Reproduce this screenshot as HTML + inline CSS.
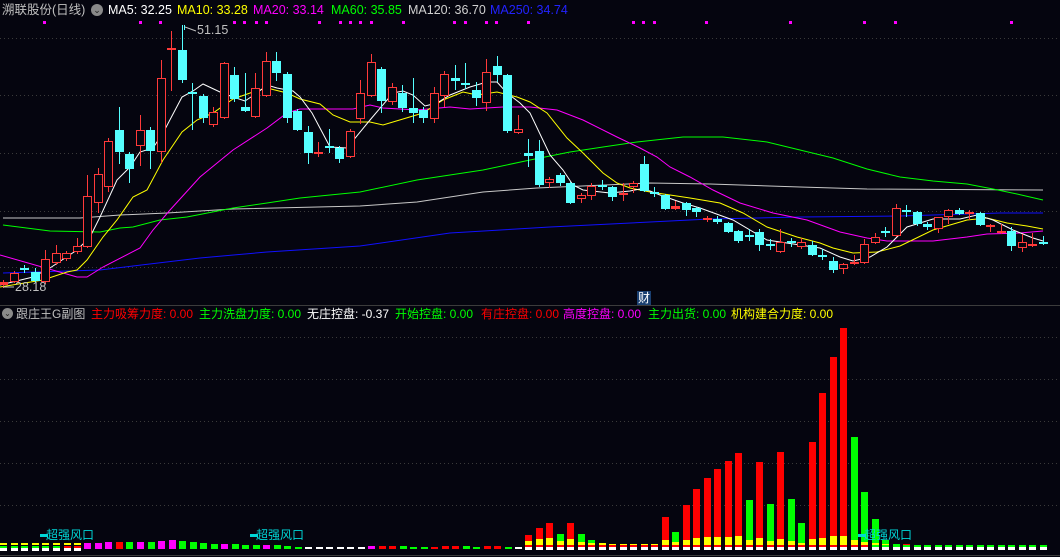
<!DOCTYPE html>
<html><head><meta charset="utf-8">
<style>
html,body{margin:0;padding:0;background:#05050f;width:1060px;height:557px;overflow:hidden;}
body{position:relative;font-family:"Liberation Sans","Noto Sans CJK SC",sans-serif;font-size:12.5px;}
.t{position:absolute;white-space:nowrap;line-height:15px;}
.u{font-size:12px;}
svg{position:absolute;left:0;top:0;}
</style></head><body>
<svg id="s" width="1060" height="557" xmlns="http://www.w3.org/2000/svg"></svg>
<div class="t" style="left:2px;top:3px;color:#c0c0c0">溯联股份(日线)</div>
<div class="t" style="left:91px;top:4px;width:12px;height:12px;border-radius:50%;background:#8a8a8a;color:#222;font-size:9px;text-align:center;line-height:12px">⌄</div>
<div class="t" style="left:108px;top:3px;color:#fff">MA5: 32.25</div>
<div class="t" style="left:177px;top:3px;color:#ffff00">MA10: 33.28</div>
<div class="t" style="left:253px;top:3px;color:#ff00ff">MA20: 33.14</div>
<div class="t" style="left:331px;top:3px;color:#00ff00">MA60: 35.85</div>
<div class="t" style="left:408px;top:3px;color:#d0d0d0">MA120: 36.70</div>
<div class="t" style="left:490px;top:3px;color:#2222ff">MA250: 34.74</div>
<div class="t" style="left:197px;top:23px;color:#c0c0c0">51.15</div>
<div class="t" style="left:15px;top:280px;color:#c0c0c0">28.18</div>
<div class="t" style="left:637px;top:291px;width:14px;height:14px;background:#1a3f70;color:#fff;font-size:12px;line-height:14px;text-align:center">财</div>
<div class="t" style="left:2px;top:308px;width:11px;height:11px;border-radius:50%;background:#8a8a8a;color:#222;font-size:8px;text-align:center;line-height:11px">⌄</div>
<div class="t u" style="left:16px;top:307px;color:#c0c0c0">跟庄王G副图</div>
<div class="t u" style="left:91px;top:307px;color:#ff0000">主力吸筹力度: 0.00</div>
<div class="t u" style="left:199px;top:307px;color:#00ff00">主力洗盘力度: 0.00</div>
<div class="t u" style="left:307px;top:307px;color:#fff">无庄控盘: -0.37</div>
<div class="t u" style="left:395px;top:307px;color:#00ff00">开始控盘: 0.00</div>
<div class="t u" style="left:481px;top:307px;color:#ff0000">有庄控盘: 0.00</div>
<div class="t u" style="left:563px;top:307px;color:#ff00ff">高度控盘: 0.00</div>
<div class="t u" style="left:648px;top:307px;color:#00ff00">主力出货: 0.00</div>
<div class="t u" style="left:731px;top:307px;color:#ffff00">机构建合力度: 0.00</div>
<div class="t u" style="left:46px;top:528px;color:#00d8d8">超强风口</div>
<div class="t u" style="left:256px;top:528px;color:#00d8d8">超强风口</div>
<div class="t u" style="left:864px;top:528px;color:#00d8d8">超强风口</div>
<script>
var s=document.getElementById('s'),h='';
function L(x1,y1,x2,y2,c,d){h+='<line x1="'+x1+'" y1="'+y1+'" x2="'+x2+'" y2="'+y2+'" stroke="'+c+'" stroke-width="1"'+(d?' stroke-dasharray="1,3"':'')+'/>';}
function R(x,y,w,hh,c){h+='<rect x="'+x+'" y="'+y+'" width="'+w+'" height="'+hh+'" fill="'+c+'"/>';}
[38,95,153,211,267,337,379,421,463,505].forEach(function(y){L(0,y+.5,1060,y+.5,'#3a3a3a',1);});
L(0,305.5,1060,305.5,'#3c3c3c');L(0,555.5,1060,555.5,'#3c3c3c');
[44,140,160,234,244,256,266,319,340,350,360,371,403,454,465,486,496,528,633,643,654,706,790,864,895,1011].forEach(function(x){R(x-1,21,3,3,'#ff00ff');});
function P(pts,c){h+='<polyline fill="none" stroke="'+c+'" stroke-width="1" points="'+pts+'"/>';}
P("3,218 80,218 120,215 167,213 233,209 360,206 417,202 483,192 537,188 650,183 710,184 800,187 867,189 1043,190",'#c8c8c8');
P("3,273 100,270 133,266 200,258 267,252 360,246 450,233 550,227 650,222 710,219 800,217 900,216 1000,213 1043,213",'#1010ff');
P("3,225 50,231 100,232 120,228 133,227 160,220 187,217 233,208 267,203 300,198 360,192 417,180 483,170 530,160 570,152 603,147 637,142 683,137 723,137 767,142 800,150 833,158 867,169 900,177 933,181 967,184 993,189 1017,194 1043,200",'#00ff00');
P("0,255 77,277 87,277 103,267 140,248 153,230 170,210 200,177 233,150 267,128 287,113 300,109 353,109 370,105 383,108 417,110 450,107 470,109 503,107 530,107 557,110 583,120 617,137 640,148 657,157 670,167 690,177 713,190 740,203 773,213 807,220 840,232 867,238 887,241 933,241 967,237 987,234 1020,233 1043,231",'#ff00ff');
P("0,287 43,280 67,272 77,270 87,260 103,237 117,220 133,197 147,190 163,160 182,132 197,120 213,113 233,99 253,92 267,88 287,93 300,99 320,104 333,115 350,122 370,122 383,125 403,119 423,113 443,100 463,92 477,95 497,92 517,97 530,102 547,113 567,138 583,153 603,173 617,183 630,188 650,192 670,195 690,198 720,203 743,213 767,227 797,237 820,243 833,248 853,253 877,252 900,246 933,230 967,220 987,218 1007,223 1027,226 1043,229",'#ffff00');
P("0,285 33,277 50,268 77,250 90,237 100,217 117,180 130,167 140,152 153,148 163,133 182,97 193,91 203,84 220,92 233,97 245,101 257,93 267,85 277,88 293,91 300,97 312,113 330,147 347,148 370,120 393,93 403,91 413,95 425,106 437,103 450,95 470,87 487,82 497,82 507,93 520,103 530,113 550,155 563,170 573,185 583,190 610,193 630,191 640,189 650,191 660,195 683,203 700,208 733,220 767,240 800,245 820,248 840,257 853,261 870,257 887,247 907,227 933,219 960,219 977,215 993,220 1013,230 1033,238 1043,241",'#ffffff');
var C=[[282,285,280,288,'r'],[273,282,271,283,'r'],[268,270,265,273,'c'],[272,281,268,283,'c'],[259,282,250,284,'r'],[253,263,245,265,'r'],[253,259,251,261,'r'],[246,252,238,254,'r'],[196,247,175,248,'r'],[174,203,168,213,'r'],[141,187,138,192,'r'],[130,152,107,164,'c'],[154,169,152,183,'c'],[130,146,115,166,'r'],[130,151,127,169,'c'],[78,152,60,163,'r'],[48,50,31,91,'r'],[50,80,25,83,'c'],[92,94,83,130,'c'],[96,118,94,123,'c'],[112,125,107,127,'r'],[63,118,62,119,'r'],[75,99,67,102,'c'],[107,111,73,112,'c'],[88,117,73,118,'r'],[61,96,52,97,'r'],[61,73,52,81,'c'],[74,118,72,123,'c'],[111,130,109,131,'c'],[132,153,126,164,'c'],[152,154,142,157,'r'],[146,148,129,153,'c'],[148,159,146,163,'c'],[131,157,129,158,'r'],[93,119,80,124,'r'],[62,96,54,97,'r'],[69,101,67,113,'c'],[87,102,83,105,'r'],[93,108,85,112,'c'],[108,113,78,123,'c'],[110,118,107,123,'c'],[93,119,87,123,'r'],[74,96,71,107,'r'],[78,81,65,90,'c'],[83,85,63,89,'c'],[90,98,82,106,'c'],[72,103,59,111,'r'],[66,75,56,82,'c'],[75,131,74,133,'c'],[129,133,115,134,'r'],[153,156,139,167,'c'],[151,185,140,187,'c'],[179,183,177,188,'r'],[175,183,173,186,'c'],[183,203,182,204,'c'],[195,199,193,203,'r'],[186,196,183,200,'r'],[185,187,180,190,'c'],[187,197,186,201,'c'],[193,195,183,201,'r'],[183,187,181,193,'r'],[164,191,156,192,'c'],[192,194,187,197,'c'],[195,209,194,210,'c'],[206,209,201,210,'r'],[203,210,202,216,'c'],[208,212,207,217,'c'],[218,220,216,222,'r'],[219,222,216,224,'c'],[223,232,222,233,'c'],[231,241,230,243,'c'],[235,237,229,241,'c'],[232,245,229,251,'c'],[244,246,239,250,'c'],[242,252,229,253,'r'],[241,243,238,247,'c'],[242,247,238,249,'r'],[245,255,241,256,'c'],[255,257,249,260,'c'],[261,270,257,273,'c'],[264,269,263,274,'r'],[262,264,255,265,'r'],[244,263,239,264,'r'],[237,243,233,244,'r'],[231,233,227,237,'c'],[208,236,204,237,'r'],[210,212,205,217,'c'],[212,224,211,226,'c'],[224,227,222,230,'c'],[217,229,217,233,'r'],[210,217,209,224,'r'],[210,214,208,215,'c'],[212,214,210,220,'r'],[213,225,212,226,'c'],[225,227,224,232,'r'],[231,233,224,234,'r'],[231,246,227,251,'c'],[242,248,234,252,'r'],[244,246,233,247,'r'],[242,244,236,245,'c']];
C.forEach(function(d,i){var x=Math.round(3+10.5*i);var col=d[4]=='r'?'#ff3a3a':'#55ffff';
 L(x+.5,d[2],x+.5,d[3],col);
 var hh=Math.max(d[1]-d[0],2);
 if(d[4]=='r'){ if(hh<=3){R(x-4,d[0],9,hh,col);} else h+='<rect x="'+(x-3.5)+'" y="'+(d[0]+.5)+'" width="8" height="'+(hh-1)+'" fill="#05050f" stroke="'+col+'" stroke-width="1"/>';}
 else R(x-4,d[0],9,hh,col);
});
L(184.5,25,184.5,30,'#55ffff');L(185,27,196,31,'#c0c0c0');L(3,287,14,287,'#c0c0c0');
var Y='#ffff00',G='#00ff00',Rd='#ff0000',M='#ff00ff',W='#ffffff';
var SL=[[3,545,Y],[14,545,Y],[24,545,Y],[35,545,Y],[45,545,Y],[56,545,Y],[67,545,Rd],[77,545,Rd],[87,543,M],[98,543,M],[108,542,M],[119,542,Rd],[129,542,G],[140,542,M],[151,542,G],[161,541,M],[172,540,M],[182,541,G],[193,542,G],[203,543,G],[214,544,G],[224,544,M],[235,544,G],[245,545,G],[256,545,G],[266,545,M],[277,545,G],[287,546,G],[298,547,G],[308,547,W],[319,547,W],[329,547,W],[340,547,W],[350,547,W],[361,547,W],[371,546,M],[382,546,Rd],[392,546,Rd],[403,546,G],[413,547,G],[424,547,G],[434,547,Rd],[445,546,Rd],[455,546,Rd],[466,546,G],[476,547,G],[487,546,Rd],[497,546,Rd],[508,547,G],[518,547,W]];
SL.forEach(function(d){var x=d[0]-3;if(x<0)x=0;
 if(d[0]<=77){R(x,543,7,2,Y);R(x,546,7,2,d[2]==Y?G:d[2]);R(x,548,7,3,W);}
 else R(x,d[1],7,Math.max(549-d[1],1),d[2]);});
var B=[[535,Rd,541],[528,Rd,539],[523,Rd,538],[534,G,541],[523,Rd,539],[534,G,542],[540,G,543],[543,Y,543],[544,G,544],[544,G,544],[544,Y,544],[544,Y,544],[544,Y,544],[517,Rd,540],[532,G,542],[505,Rd,540],[489,Rd,538],[478,Rd,537],[469,Rd,537],[461,Rd,537],[453,Rd,536],[500,G,540],[462,Rd,538],[504,G,541],[452,Rd,539],[499,G,541],[523,G,543],[442,Rd,539],[393,Rd,538],[357,Rd,536],[328,Rd,536],[437,G,540],[492,G,542],[519,G,543],[540,G,544],[544,G,545],[544,Rd,545],[545,Rd,545],[545,G,545],[545,G,545],[545,Rd,545],[545,Rd,545],[545,G,545],[545,G,545],[545,G,545],[545,G,545],[545,G,545],[545,W,545],[545,W,545],[545,G,545]];
B.forEach(function(d,p){var x=Math.round(3+10.5*(50+p))-3;
 if(d[0]<d[2]){R(x,d[0],7,d[2]-d[0],d[1]);}
 R(x,d[2],7,Math.max(545-d[2],1),Y);R(x,545,7,2,p>32?G:Rd);R(x,547,7,3,W);});
R(40,534,8,3,'#00d8d8');R(250,534,8,3,'#00d8d8');R(858,534,8,3,'#00d8d8');
s.innerHTML=h;
</script>
</body></html>
